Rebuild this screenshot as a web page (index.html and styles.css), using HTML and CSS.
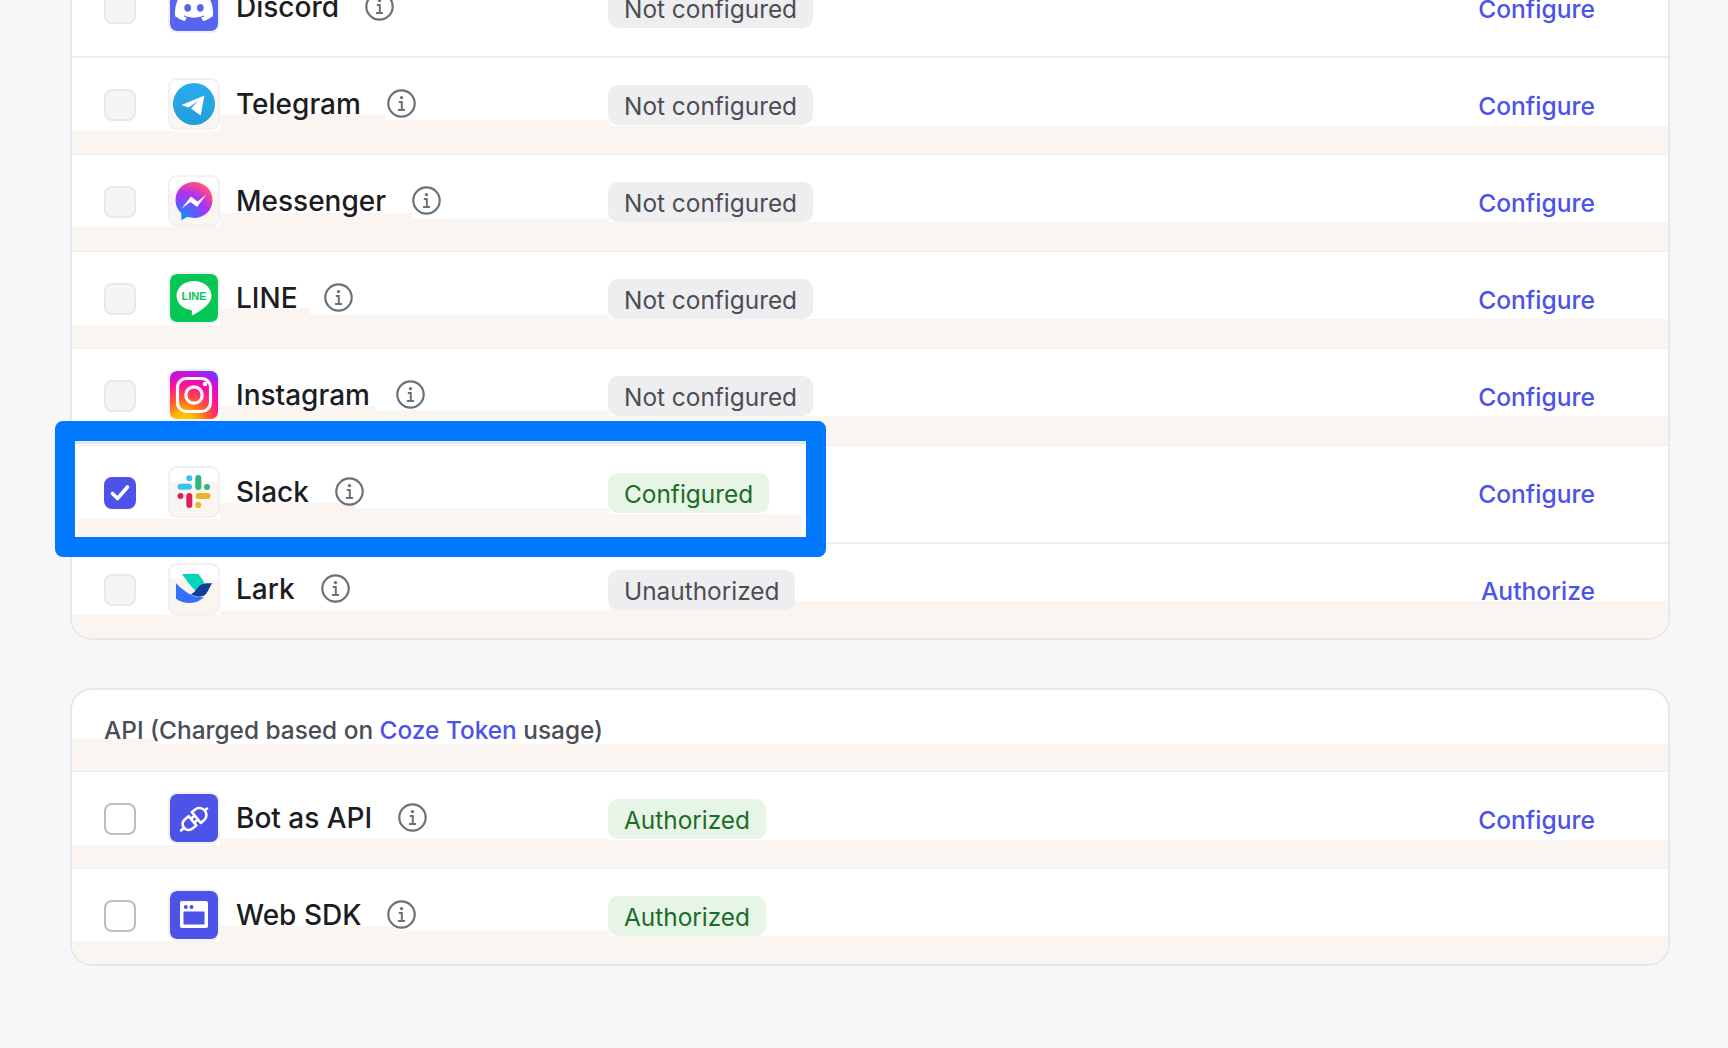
FILE: index.html
```html
<!DOCTYPE html>
<html lang="en">
<head>
<meta charset="utf-8">
<title>Publish</title>
<link rel="stylesheet" href="styles.css">
</head>
<body>
<main class="page">
  <section class="card card-channels">
    <div class="row row-discord">
      <span class="check check-off"></span>
      <span class="logo"><svg class="logo-svg" viewBox="0 0 48 48"><rect width="48" height="48" fill="#5865f2"/><svg x="5" y="4.500" width="38" height="38" viewBox="0 0 24 24"><path fill="#fff" d="M20.317 4.3698a19.7913 19.7913 0 00-4.8851-1.5152.0741.0741 0 00-.0785.0371c-.211.3753-.4447.8648-.6083 1.2495-1.8447-.2762-3.68-.2762-5.4868 0-.1636-.3933-.4058-.8742-.6177-1.2495a.077.077 0 00-.0785-.037 19.7363 19.7363 0 00-4.8852 1.515.0699.0699 0 00-.0321.0277C.5334 9.0458-.319 13.5799.0992 18.0578a.0824.0824 0 00.0312.0561c2.0528 1.5076 4.0413 2.4228 5.9929 3.0294a.0777.0777 0 00.0842-.0276c.4616-.6304.8731-1.2952 1.226-1.9942a.076.076 0 00-.0416-.1057c-.6528-.2476-1.2743-.5495-1.8722-.8923a.077.077 0 01-.0076-.1277c.1258-.0943.2517-.1923.3718-.2914a.0743.0743 0 01.0776-.0105c3.9278 1.7933 8.18 1.7933 12.0614 0a.0739.0739 0 01.0785.0095c.1202.099.246.1981.3728.2924a.077.077 0 01-.0066.1276 12.2986 12.2986 0 01-1.873.8914.0766.0766 0 00-.0407.1067c.3604.698.7719 1.3628 1.225 1.9932a.076.076 0 00.0842.0286c1.961-.6067 3.9495-1.5219 6.0023-3.0294a.077.077 0 00.0313-.0552c.5004-5.177-.8382-9.6739-3.5485-13.6604a.061.061 0 00-.0312-.0286zM8.02 15.3312c-1.1825 0-2.1569-1.0857-2.1569-2.419 0-1.3332.9555-2.4189 2.157-2.4189 1.2108 0 2.1757 1.0952 2.1568 2.419 0 1.3332-.9555 2.4189-2.1569 2.4189zm7.9748 0c-1.1825 0-2.1569-1.0857-2.1569-2.419 0-1.3332.9554-2.4189 2.1569-2.4189 1.2108 0 2.1757 1.0952 2.1568 2.419 0 1.3332-.946 2.4189-2.1568 2.4189Z"/></svg></svg></span>
      <span class="title"><span class="name">Discord</span><svg class="info" viewBox="0 0 29 29"><use href="#info"/></svg></span>
      <span class="badge badge-gray">Not configured</span>
      <a class="action">Configure</a>
    </div>

    <div class="row row-telegram">
      <span class="check check-off"></span>
      <span class="logo"><svg class="logo-svg" viewBox="0 0 48 48"><defs><linearGradient id="tg" x1="0" y1="0" x2="0" y2="1"><stop offset="0" stop-color="#2aabee"/><stop offset="1" stop-color="#229ed9"/></linearGradient></defs><circle cx="24" cy="24" r="21" fill="url(#tg)"/><path fill="#fff" d="M34.5 15.5 11.5 25l7 2.6 9.5-6.6-7 7.6 9.7 6.9z"/></svg></span>
      <span class="title"><span class="name">Telegram</span><svg class="info" viewBox="0 0 29 29"><use href="#info"/></svg></span>
      <span class="badge badge-gray">Not configured</span>
      <a class="action">Configure</a>
    </div>

    <div class="row row-messenger">
      <span class="check check-off"></span>
      <span class="logo"><svg class="logo-svg" viewBox="0 0 48 48"><defs><radialGradient id="ms" cx="0.2" cy="1" r="1.15"><stop offset="0" stop-color="#0099ff"/><stop offset=".35" stop-color="#5f5bff"/><stop offset=".62" stop-color="#b030f0"/><stop offset=".88" stop-color="#ff4a8a"/><stop offset="1" stop-color="#ff6f5e"/></radialGradient></defs><path fill="url(#ms)" d="M24 5C13.4 5 5.5 12.8 5.5 23c0 5.4 2.2 10 5.8 13.2v7l6.3-3.400C19.600 40.500 21.700 41 24 41c10.600 0 18.500-7.800 18.500-18S34.600 5 24 5z"/><path fill="#fff" d="M11.500 31.500 21 19.500l6.500 5 9-7-9.500 12.500-6.500-5z"/></svg></span>
      <span class="title"><span class="name">Messenger</span><svg class="info" viewBox="0 0 29 29"><use href="#info"/></svg></span>
      <span class="badge badge-gray">Not configured</span>
      <a class="action">Configure</a>
    </div>

    <div class="row row-line">
      <span class="check check-off"></span>
      <span class="logo"><svg class="logo-svg" viewBox="0 0 48 48"><rect width="48" height="48" fill="#06c755"/><path fill="#fff" d="M24 7C14.300 7 6.500 13.500 6.500 21.800c0 7.100 5.800 12.900 14.300 14.200 2 .4 1 2.500 1 4.200 0 1.500 1.300 1 2.200.4 3.700-2.300 17.500-9.400 17.500-18.800C41.500 13.500 33.700 7 24 7z"/><text class="line-word" x="24" y="26" text-anchor="middle">LINE</text></svg></span>
      <span class="title"><span class="name">LINE</span><svg class="info" viewBox="0 0 29 29"><use href="#info"/></svg></span>
      <span class="badge badge-gray">Not configured</span>
      <a class="action">Configure</a>
    </div>

    <div class="row row-instagram">
      <span class="check check-off"></span>
      <span class="logo"><svg class="logo-svg" viewBox="0 0 48 48"><defs><radialGradient id="ig" cx="0.3" cy="1.1" r="1.2"><stop offset="0" stop-color="#ffdd00"/><stop offset=".22" stop-color="#ffb300"/><stop offset=".42" stop-color="#ff5a30"/><stop offset=".68" stop-color="#ff0f9c"/><stop offset=".85" stop-color="#d010d8"/><stop offset="1" stop-color="#6f35ff"/></radialGradient></defs><rect width="48" height="48" fill="url(#ig)"/><rect x="7.500" y="7.500" width="33" height="33" rx="9" fill="none" stroke="#fff" stroke-width="3.200"/><circle cx="24" cy="24" r="8.200" fill="none" stroke="#fff" stroke-width="3.200"/><circle cx="35" cy="13" r="2.300" fill="#fff"/></svg></span>
      <span class="title"><span class="name">Instagram</span><svg class="info" viewBox="0 0 29 29"><use href="#info"/></svg></span>
      <span class="badge badge-gray">Not configured</span>
      <a class="action">Configure</a>
    </div>

    <div class="row row-slack">
      <span class="check check-on"><svg viewBox="0 0 28 28"><path d="M6.500 14.500l5 5 10-11.500" fill="none" stroke="#fff" stroke-width="3.600" stroke-linecap="round" stroke-linejoin="round"/></svg></span>
      <span class="logo"><svg class="logo-svg" viewBox="0 0 48 48"><g fill="none" stroke-width="6" stroke-linecap="round"><path stroke="#36c5f0" d="M10.500 18.700H19"/><path stroke="#2eb67d" d="M28.300 10v9"/><path stroke="#e01e5a" d="M19.300 28v9"/><path stroke="#ecb22e" d="M28.500 28h9"/></g><circle cx="19.300" cy="10.300" r="3" fill="#36c5f0"/><circle cx="37" cy="19" r="3" fill="#2eb67d"/><circle cx="10.500" cy="28" r="3" fill="#e01e5a"/><circle cx="28.300" cy="37" r="3" fill="#ecb22e"/></svg></span>
      <span class="title"><span class="name">Slack</span><svg class="info" viewBox="0 0 29 29"><use href="#info"/></svg></span>
      <span class="badge badge-green">Configured</span>
      <a class="action">Configure</a>
      <div class="highlight"></div>
    </div>

    <div class="row row-lark">
      <span class="check check-off"></span>
      <span class="logo"><svg class="logo-svg" viewBox="0 0 48 48"><path fill="#00d6b9" d="M12 9h16.300c2.700 3 5 6.800 6.700 10.500l-8.300 7.500C21 21.500 16 15 12 9z"/><path fill="#3370ff" d="M6 18.300c6.500 6.700 14 12 21 13.700l7 .3c-3.700 3.400-8.700 5.700-14 5.700-5.500 0-10.500-1.500-14-4.300z"/><path fill="#133c9a" d="M20.700 29.300c3.500-.8 6.700-6.800 9.800-9.300 3.300-2 7.500-2 11.800-1.700-1.800 1.400-3.500 8-7.300 11.700-3 2-8.500 2.600-14.300-.7z"/></svg></span>
      <span class="title"><span class="name">Lark</span><svg class="info" viewBox="0 0 29 29"><use href="#info"/></svg></span>
      <span class="badge badge-gray">Unauthorized</span>
      <a class="action">Authorize</a>
    </div>
  </section>

  <section class="card card-api">
    <header class="card-head">API (Charged based on <a class="inline-link">Coze Token</a> usage)</header>

    <div class="row row-bot">
      <span class="check"></span>
      <span class="logo"><svg class="logo-svg" viewBox="0 0 48 48"><rect width="48" height="48" fill="#4d53e8"/><g transform="translate(24 25.500) rotate(-40)" fill="none" stroke="#fff" stroke-width="2.600" stroke-linecap="round" stroke-linejoin="round"><path d="M-17 0h4M-2 -6H-7A6 6 0 0 0 -7 6H-2ZM-2 -2.500h5M-2 2.500h5M3 -7H7A7 7 0 0 1 7 7H3ZM14 0h3"/></g></svg></span>
      <span class="title"><span class="name">Bot as API</span><svg class="info" viewBox="0 0 29 29"><use href="#info"/></svg></span>
      <span class="badge badge-green">Authorized</span>
      <a class="action">Configure</a>
    </div>

    <div class="row row-web">
      <span class="check"></span>
      <span class="logo"><svg class="logo-svg" viewBox="0 0 48 48"><rect width="48" height="48" fill="#4d53e8"/><rect x="10" y="10" width="28" height="27" rx="2" fill="#fff"/><rect x="13.500" y="20.500" width="21" height="13" fill="#4d53e8"/><circle cx="15.800" cy="16" r="2" fill="#4d53e8"/><circle cx="21.500" cy="16" r="2" fill="#4d53e8"/></svg></span>
      <span class="title"><span class="name">Web SDK</span><svg class="info" viewBox="0 0 29 29"><use href="#info"/></svg></span>
      <span class="badge badge-green">Authorized</span>
    </div>
  </section>
</main>

<svg class="defs" aria-hidden="true" width="0" height="0"><defs><g id="info"><circle cx="14.500" cy="14.500" r="13.200" fill="none" stroke="#6f7076" stroke-width="2.200"/><circle cx="14.500" cy="8.600" r="1.700" fill="#6f7076"/><path d="M11.800 13h3v8M11 21h7" fill="none" stroke="#6f7076" stroke-width="2"/></g></defs></svg>
</body>
</html>
```

FILE: styles.css
```css
* { box-sizing: border-box; }

html, body {
  margin: 0;
  height: 100%;
  overflow: hidden;
  background: #f7f7f9;
}

body {
  font-family: Inter, "Liberation Sans", sans-serif;
  color: #1c1d23;
}

.page {
  display: flex;
  flex-direction: column;
  gap: 48px;
  margin: -42px 58px 0 70px;
}

.card {
  background: #fff;
  border: 2px solid #e8e8eb;
  border-radius: 22px;
}

.card-channels {
  border-top-color: transparent;
}

.row {
  --beige: #faf5f1;
  --a: 23px;
  --c: 40px;
  --cw: 165px;
  --d: 34px;
  --e: 28px;
  --ew: 1200px;
  position: relative;
  display: flex;
  align-items: flex-start;
  height: 97px;
  padding: 20px 0 0 32px;
  border-top: 1px solid #edeef1;
  background:
    linear-gradient(var(--beige), var(--beige)) 0 100% / 148px var(--a) no-repeat,
    linear-gradient(var(--beige), var(--beige)) 148px 100% / var(--cw) var(--c) no-repeat,
    linear-gradient(var(--beige), var(--beige)) calc(148px + var(--cw)) 100% / calc(389px - var(--cw)) var(--d) no-repeat,
    linear-gradient(var(--beige), var(--beige)) 537px 100% / var(--ew) var(--e) no-repeat;
}

.row-discord {
  height: 96px;
  padding-top: 21px;
  border-top: 0;
  background: none;
}

.row-telegram { height: 98px; border-top: 2px solid #eeeef0; }
.row-messenger { --a: 24px; --c: 38px; --cw: 192px; --d: 33px; --e: 29px; }
.row-line { --c: 40px; --cw: 90px; --e: 29px; }
.row-instagram { --c: 39px; --cw: 155px; --d: 35px; --e: 29px; }
.row-slack { --c: 39px; --cw: 135px; --ew: 194px; z-index: 1; }

.row-lark {
  --a: 23px;
  --c: 27px;
  --d: 27px;
  --e: 37px;
  height: 96px;
  padding-top: 19px;
  border-top: 2px solid #eeeef0;
  border-radius: 0 0 20px 20px;
}

.row-bot { --c: 29px; --d: 29px; }

.row-web {
  --a: 23px;
  --c: 38px;
  --cw: 180px;
  --d: 34px;
  --e: 28px;
  height: 96px;
  border-radius: 0 0 20px 20px;
}

.check {
  flex: none;
  width: 32px;
  height: 32px;
  margin: 11px 32px 0 0;
  background: #fff;
  border: 2px solid #bdbdc1;
  border-radius: 8px;
}

.check-off {
  background: #f5f5f6;
  border-color: #e9e9eb;
}

.check-on {
  background: #4d53e8;
  border-color: #4d53e8;
}

.check svg {
  display: block;
  width: 28px;
  height: 28px;
}

.logo {
  flex: none;
  width: 52px;
  height: 52px;
  margin-right: 16px;
  overflow: hidden;
  background: linear-gradient(#fff 14px, var(--beige) 14px);
  border: 2px solid #f1f1f3;
  border-radius: 9px;
}

.logo-svg {
  display: block;
  width: 48px;
  height: 48px;
  border-radius: 6px;
}

.title {
  flex: none;
  display: flex;
  align-items: center;
  gap: 26px;
  width: 372px;
  height: 52px;
}

.name {
  font-size: 28px;
  font-weight: 500;
  line-height: 53px;
  color: #1c1d23;
  white-space: nowrap;
}

.info {
  flex: none;
  width: 29px;
  height: 29px;
  margin-top: -1px;
}

.badge {
  flex: none;
  height: 40px;
  margin-top: 7px;
  padding: 0 16px;
  border-radius: 10px;
  font-size: 24.4px;
  line-height: 42px;
  white-space: nowrap;
}

.badge-gray {
  color: #4b4d56;
  background: #eeeef0;
}

.badge-green {
  color: #1c6b2a;
  background: #e6f5e6;
}

.action {
  margin: 7px 73px 0 auto;
  font-size: 24.6px;
  font-weight: 500;
  line-height: 42px;
  color: #4d53e8;
  white-space: nowrap;
}

.highlight {
  position: absolute;
  top: -25px;
  left: -17px;
  width: 771px;
  height: 136px;
  background: transparent;
  border: 20px solid #0078ff;
  border-radius: 8px;
  box-shadow:
    inset 0 3px 0 #e9e9ec,
    inset 3px 0 0 #fff,
    inset -4px 0 0 #fff;
}

.card-head {
  height: 81px;
  padding: 23px 0 0 32px;
  font-size: 24.4px;
  font-weight: 500;
  line-height: 34px;
  color: #4b4d56;
  border-radius: 20px 20px 0 0;
  background:
    linear-gradient(#faf5f1, #faf5f1) 0 100% / 81px 32px no-repeat,
    linear-gradient(#faf5f1, #faf5f1) 0 100% / 100% 27px no-repeat;
}

.inline-link {
  color: #4d53e8;
}

.line-word {
  font-family: "Liberation Sans", sans-serif;
  font-size: 11px;
  font-weight: 700;
  fill: #06c755;
}

.defs {
  position: absolute;
}
```
